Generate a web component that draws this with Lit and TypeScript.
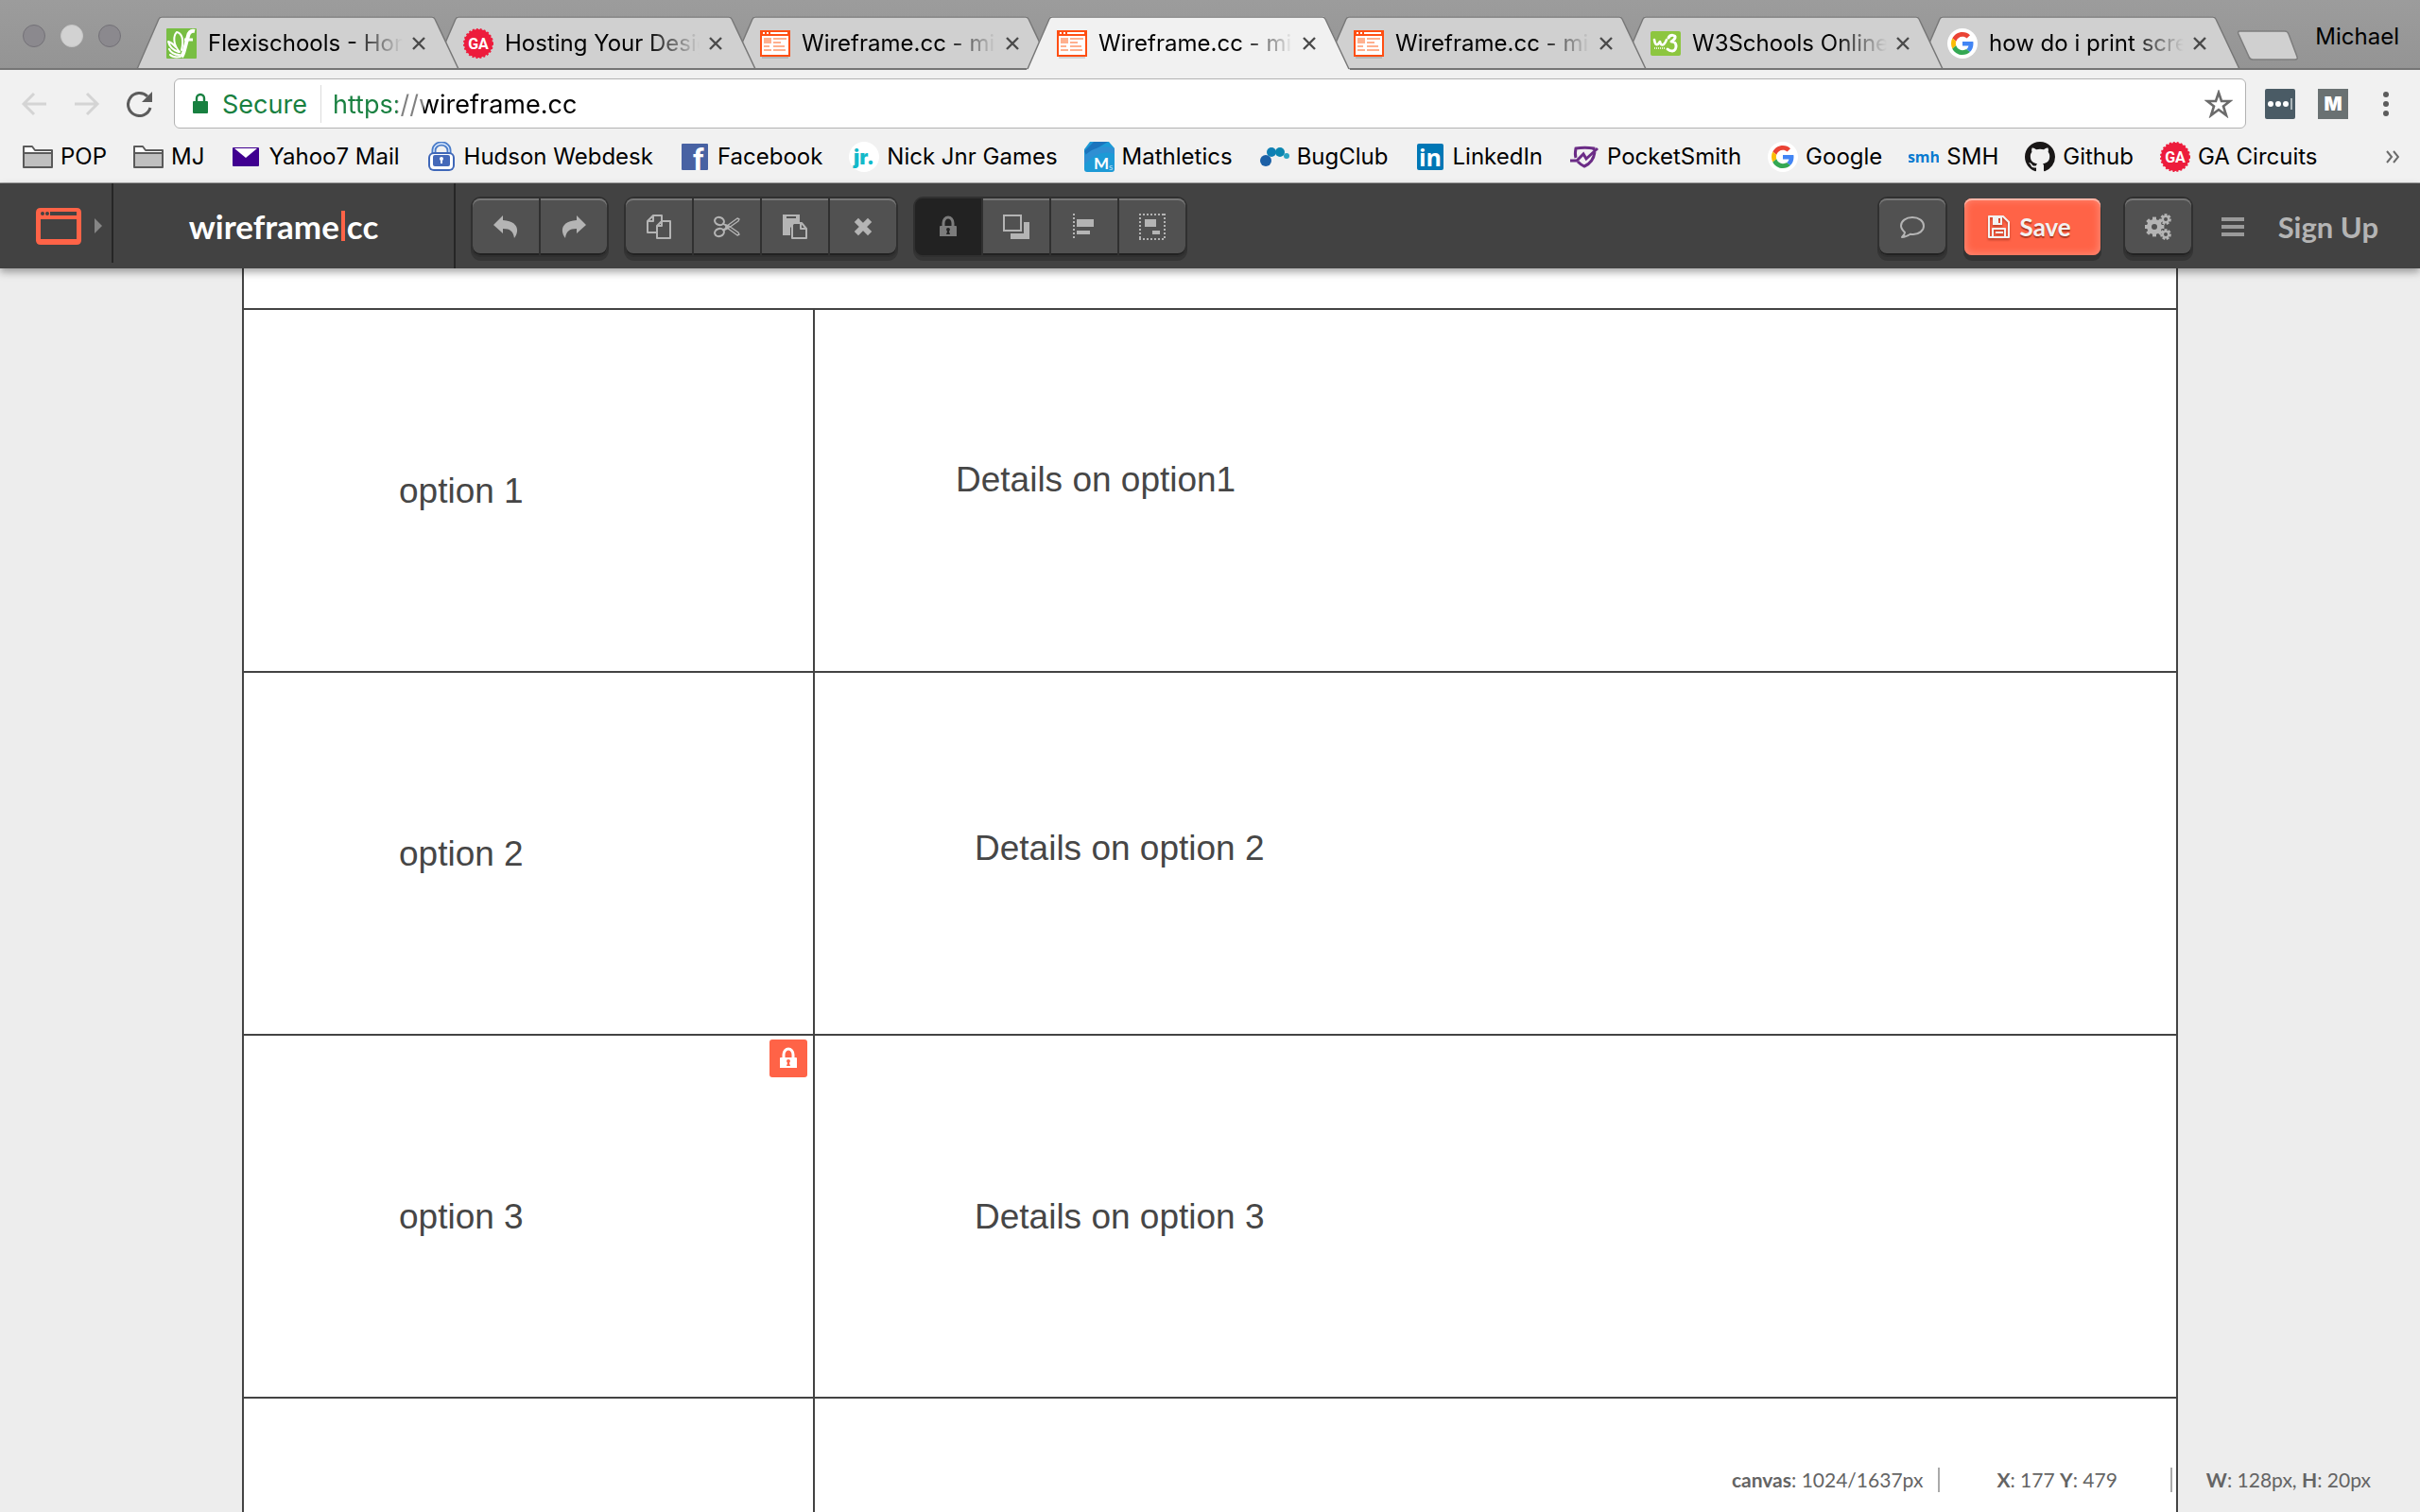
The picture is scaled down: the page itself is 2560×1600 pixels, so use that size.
import { LitElement, html, css, svg, TemplateResult } from "lit";
import { customElement, property, state } from "lit/decorators.js";
import { classMap } from "lit/directives/class-map.js";
import { styleMap } from "lit/directives/style-map.js";

const googleG = (t: string) => svg`<g transform=${t}>
  <path fill="#EA4335" d="M24 9.5c3.54 0 6.71 1.22 9.21 3.6l6.85-6.85C35.9 2.38 30.47 0 24 0 14.62 0 6.51 5.38 2.56 13.22l7.98 6.19C12.43 13.72 17.74 9.5 24 9.5z"/>
  <path fill="#4285F4" d="M46.98 24.55c0-1.57-.15-3.09-.38-4.55H24v9.02h12.94c-.58 2.96-2.26 5.48-4.78 7.18l7.73 6c4.51-4.18 7.09-10.36 7.09-17.65z"/>
  <path fill="#FBBC05" d="M10.53 28.59c-.48-1.45-.76-2.99-.76-4.59s.27-3.14.76-4.59l-7.98-6.19C.92 16.46 0 20.12 0 24c0 3.88.92 7.54 2.56 10.78l7.97-6.19z"/>
  <path fill="#34A853" d="M24 48c6.48 0 11.93-2.13 15.89-5.81l-7.73-6c-2.15 1.45-4.92 2.3-8.16 2.3-6.26 0-11.57-4.22-13.47-9.91l-7.98 6.19C6.51 42.62 14.62 48 24 48z"/></g>`;

/* 32-unit site and folder icons */
const SITE: Record<string, TemplateResult> = {
  flexi: svg`<rect width="32" height="32" rx="1" fill="#78be43"/>
    <g fill="none" stroke="#fff" stroke-width="2" stroke-linejoin="round" stroke-linecap="round">
      <path d="M14 25C7 17 7 8 11 4c5 1 8 7 5 19"/><path d="M13 25C7 23 3 19 2 14c3 1 6 3 8 6"/>
      <path d="M14 28C9 28 5 26 3 22"/><path d="M15 30C10 31 6 30 4 28"/>
      <path stroke-width="4" stroke-linecap="butt" d="M30 3c-4-1-6 1-7 5l-4 15c-1 4-2 6-3 7"/><path stroke-width="3" stroke-linecap="butt" d="M19 12h9"/></g>`,
  ga: svg`<circle cx="16" cy="16" r="15" fill="#ed1c3c"/><circle cx="16" cy="16" r="15" fill="none" stroke="#ed1c3c" stroke-width="2" stroke-dasharray="2 2"/>
    <text x="16" y="22" text-anchor="middle" font-family="Roboto, sans-serif" font-weight="700" font-size="16" fill="#fff">GA</text>`,
  wire: svg`<rect x="2" y="28" width="28" height="4" fill="#000" opacity=".12"/><rect width="32" height="28" y="2" fill="#ff4e12"/><rect x="2" y="8" width="28" height="20" fill="#fff"/>
    <path fill="#fff" d="M3 4h2v2H3zM7 4h2v2H7zM11 4h18v2H11z"/>
    <path fill="#ffb08e" d="M4 10h8v6H4zM14 10h14v2H14zM14 14h8v2H14zM4 18h6v2H4zM14 18h12v2H14zM4 22h8v2H4zM14 22h13v2H14z"/>`,
  w3: svg`<rect x="0" y="3" width="32" height="26" rx="2" fill="#8dc63f"/>
    <path fill="none" stroke="#fff" stroke-width="2.6" stroke-linecap="round" stroke-linejoin="round" d="M4 12c1 6 3 7 6 2 1 5 4 5 7-2"/>
    <path fill="none" stroke="#fff" stroke-width="3" stroke-linecap="round" stroke-linejoin="round" d="M19 10c2-4 8-3 7 0-1 3-3 3-4 4 6-1 7 9 1 10-3 0-4-1-5-2"/>
    <path stroke="#e5f2d2" stroke-width="2" stroke-dasharray="1 1" d="M4 21h12"/>`,
  google: svg`<circle cx="16" cy="16" r="16" fill="#fff"/>${googleG("translate(4 4) scale(.5)")}`,
  folder: svg`<path d="M1 8V5h9l3 4h18v18H1z" fill="#fff" stroke="#5a5a5a" stroke-width="2" stroke-linejoin="round"/><path d="M2 13h28v13H2z" fill="#c0c0c0"/><path d="M1 12h30" stroke="#5a5a5a" stroke-width="2"/>`,
  mail: svg`<rect x="2" y="6" width="28" height="20" rx="1" fill="#400090"/><path fill="#fff" d="M4 7h24l-12 10z"/>`,
  webdesk: svg`<path d="M8 14V9a8 7 0 0 1 16 0v5" fill="none" stroke="#4a7cc9" stroke-width="5"/><path d="M8 14V9a8 7 0 0 1 16 0v5" fill="none" stroke="#dcebff" stroke-width="1.4"/>
    <rect x="2" y="11" width="28" height="20" rx="6" fill="#3f67b8"/><rect x="4" y="13" width="24" height="16" rx="4" fill="#fff"/><rect x="7" y="14" width="18" height="12" rx="2" fill="#4569b9"/>
    <circle cx="16" cy="18" r="2" fill="#fff"/><path stroke="#fff" stroke-width="2" d="M16 18v5"/>`,
  fb: svg`<rect x="2" y="2" width="28" height="28" rx="1" fill="#4862a3"/><text x="14" y="30" font-family="Roboto, sans-serif" font-weight="700" font-size="32" fill="#fff">f</text>`,
  jr: svg`<circle cx="16" cy="16" r="16" fill="#fff"/><text x="16" y="24" text-anchor="middle" font-family="Inter, sans-serif" font-weight="900" font-size="21" fill="#12b9c9">jr.</text>`,
  mathletics: svg`<path d="M6 0h20l6 7v22q0 3-3 3H3q-3 0-3-3V8z" fill="#1d9ad6"/><path d="M10 0h15L2 14l-2-4z" fill="#1c74bd"/><path d="M32 7v6C20 9 10 14 0 24v-9C10 6 20 3 32 7z" fill="#2f8fd3"/>
    <text x="10" y="29" font-family="Lato, sans-serif" font-weight="700" font-size="17" fill="#fff">M</text><text x="26" y="30" font-family="Lato, sans-serif" font-size="10" fill="#bfe4f6">s</text>`,
  bug: svg`<g><circle cx="7" cy="20" r="6" fill="#1c60a6"/><circle cx="13" cy="11" r="5" fill="#0f7fb4"/><circle cx="22" cy="11" r="5" fill="#0c86b0"/><circle cx="29" cy="15" r="3" fill="#2ba3c2"/></g>`,
  linkedin: svg`<rect x="2" y="2" width="28" height="28" rx="2" fill="#0077b5"/><text x="16" y="26" text-anchor="middle" font-family="'Open Sans', sans-serif" font-weight="700" font-size="25" fill="#fff">in</text>`,
  pocket: svg`<g fill="none" stroke="#6b2c86" stroke-width="3"><path d="M26 9V7c-7-1-12-1-19 0-1 5-1 7 0 10"/><path d="M1 20h7l7-7 3 5L30 7"/><path d="M27 11c-1 7-4 12-11 15-3-1-5-3-7-5"/></g>`,
  smh: svg`<text x="16" y="22" text-anchor="middle" font-family="'Open Sans', sans-serif" font-weight="700" font-size="16" fill="#0a7bd0">smh</text>`,
  github: svg`<path transform="scale(2)" fill="#191717" d="M8 0C3.58 0 0 3.58 0 8c0 3.54 2.29 6.53 5.47 7.59.4.07.55-.17.55-.38 0-.19-.01-.82-.01-1.49-2.01.37-2.53-.49-2.69-.94-.09-.23-.48-.94-.82-1.13-.28-.15-.68-.52-.01-.53.63-.01 1.08.58 1.23.82.72 1.21 1.87.87 2.33.66.07-.52.28-.87.51-1.07-1.78-.2-3.64-.89-3.64-3.95 0-.87.31-1.59.82-2.15-.08-.2-.36-1.02.08-2.12 0 0 .67-.21 2.2.82.64-.18 1.32-.27 2-.27s1.36.09 2 .27c1.53-1.04 2.2-.82 2.2-.82.44 1.1.16 1.92.08 2.12.51.56.82 1.27.82 2.15 0 3.07-1.87 3.75-3.65 3.95.29.25.54.73.54 1.48 0 1.07-.01 1.93-.01 2.2 0 .21.15.46.55.38A8.01 8.01 0 0 0 16 8c0-4.42-3.58-8-8-8z"/>`,
};

const gear = (cx: number, cy: number, r: number, w: number, n: number, hole: number) => svg`
  <g transform="translate(${cx} ${cy})"><circle r=${(r + hole) / 2} fill="none" stroke="currentColor" stroke-width=${r - hole}/>
  ${Array.from({ length: n }, (_, i) => svg`<rect x=${-w / 2} y=${-r - w * 0.6} width=${w} height=${w} fill="currentColor" transform="rotate(${(i * 360) / n})"/>`)}</g>`;

/* 28-unit tool icons */
const TOOL: Record<string, TemplateResult> = {
  undo: svg`<path fill="currentColor" d="M11 2 1 12l10 9v-5c8 0 11 3 12 10 6-8 4-18-12-19z"/>`,
  redo: svg`<path fill="currentColor" d="M17 2l10 10-10 9v-5C9 16 6 19 5 26-1 18 1 8 17 7z"/>`,
  copy: svg`<path fill="none" stroke="currentColor" stroke-width="2" stroke-linejoin="round" d="M11 20H2V8l6-6h9v6M8 2v6H2M17 8h9v18H12V13zM17 8v5h-5"/>`,
  cut: svg`<g fill="none" stroke="currentColor"><ellipse cx="6" cy="8" rx="5" ry="4" stroke-width="2" transform="rotate(20 6 8)"/><ellipse cx="6" cy="20" rx="5" ry="4" stroke-width="2" transform="rotate(-20 6 20)"/>
    <path stroke-width="1.4" stroke-linejoin="round" d="M10 11l4 2 11-8 2 1-1 2-10 7-6 3M10 17l4-2 11 8 2-1-1-2-10-7-6-2"/></g><circle cx="14" cy="14" r="2" fill="currentColor"/>`,
  paste: svg`<path fill="currentColor" fill-rule="evenodd" d="M1 1h18v8h-4l-6 6v8H1zM5 3v2h10V3z"/><path fill="none" stroke="currentColor" stroke-width="2" stroke-linejoin="round" d="M17 10h4l5 6v10H11V10zM20 10v6h6"/>`,
  remove: svg`<path stroke="currentColor" stroke-width="6" stroke-linecap="square" stroke-linejoin="round" d="M9 9l10 10M19 9 9 19"/>`,
  lock: svg`<path fill="none" stroke="currentColor" stroke-width="3" d="M9 14V10a5 6 0 0 1 10 0v4"/><path fill="currentColor" fill-rule="evenodd" d="M6 13h16q1 0 1 1v10H5V14q0-1 1-1zm8 2a2 2 0 0 0-2 2l1 2-1 3h4l-1-3 1-2a2 2 0 0 0-2-2z"/>`,
  layers: svg`<path fill="currentColor" d="M22 9h6v18H8v-6h14z"/><rect x="1" y="2" width="18" height="16" fill="none" stroke="currentColor" stroke-width="2"/>`,
  align: svg`<path stroke="currentColor" stroke-width="2" stroke-dasharray="2 2" d="M3 0v28"/><path fill="currentColor" d="M6 6h18v8H6zM6 18h14v4H6z"/>`,
  group: svg`<path fill="none" stroke="currentColor" stroke-width="2" stroke-dasharray="2 2" d="M0 1h28M0 27h28M1 0v28M27 0v28"/><path fill="currentColor" d="M6 6h12v8H6zM14 18h8v4h-8z"/>`,
  comment: svg`<path fill="none" stroke="currentColor" stroke-width="2" stroke-linejoin="round" d="M14 4c7 0 12 4 12 9s-5 9-11 9c-2 0-2 0-3-.3C10 23 7 25 3 25c2-2 3-3 3-5-2-2-4-4-4-7 0-5 5-9 12-9z"/>`,
  gears: svg`${gear(10, 14, 8, 4, 8, 3)}${gear(22, 6, 4, 3, 7, 2)}${gear(22, 22, 4, 3, 7, 2)}`,
  save: svg`<path fill="none" stroke="currentColor" stroke-width="2" stroke-linejoin="round" d="M3 3h15l6 6v16H3zM7 25v-9h13v9"/><path fill="currentColor" fill-rule="evenodd" d="M7 3h10v9H7zm6 2v5h2V5z"/><path stroke="currentColor" stroke-width="2" d="M10 20h8"/>`,
};

const TABS = [
  { icon: "flexi", title: "Flexischools - Home" },
  { icon: "ga", title: "Hosting Your Design" },
  { icon: "wire", title: "Wireframe.cc - minimal" },
  { icon: "wire", title: "Wireframe.cc - minimal" },
  { icon: "wire", title: "Wireframe.cc - minimal" },
  { icon: "w3", title: "W3Schools Online" },
  { icon: "google", title: "how do i print screen" },
];

const BOOKMARKS = [
  ["folder", "POP"], ["folder", "MJ"], ["mail", "Yahoo7 Mail"], ["webdesk", "Hudson Webdesk"], ["fb", "Facebook"],
  ["jr", "Nick Jnr Games"], ["mathletics", "Mathletics"], ["bug", "BugClub"], ["linkedin", "LinkedIn"],
  ["pocket", "PocketSmith"], ["google", "Google"], ["smh", "SMH"], ["github", "Github"], ["ga", "GA Circuits"],
];

const TOOL_GROUPS = [
  [["undo", "Undo"], ["redo", "Redo"]],
  [["copy", "Copy"], ["cut", "Cut"], ["paste", "Paste"], ["remove", "Delete"]],
  [["lock", "Lock"], ["layers", "Order"], ["align", "Align"], ["group", "Group"]],
];

/* Text boxes placed on the drawing, in canvas pixels from the corner of their cell */
const ROWS = [
  { label: "option 1", lx: 164, ly: 172, detail: "Details on option1", dx: 149, dy: 160 },
  { label: "option 2", lx: 164, ly: 172, detail: "Details on option 2", dx: 169, dy: 166 },
  { label: "option 3", lx: 164, ly: 172, detail: "Details on option 3", dx: 169, dy: 172, locked: true },
];

const reset = css`
  * { box-sizing: border-box; }
  button { appearance: none; border: 0; margin: 0; padding: 0; background: none; font: inherit; color: inherit; cursor: pointer; }
  a { color: inherit; text-decoration: none; }
  svg { display: block; flex: none; }
`;

@customElement("browser-tabs")
class BrowserTabs extends LitElement {
  @state() private active = 3;
  static styles = [reset, css`
    :host { display: block; font: 24px/32px Inter, sans-serif; color: #000; }
    .strip { display: flex; height: 74px; padding: 17px 22px 0 24px; background: linear-gradient(#9c9c9c, #949494); box-shadow: inset 0 -2px #757575; }
    .lights { display: flex; gap: 16px; padding: 9px 0 0; flex: none; width: 120px; }
    .light { width: 24px; height: 24px; border-radius: 50%; background: #8b898e; border: 1px solid #737177; }
    .light.mid { background: #d2d2d2; border-color: #c6c6c6; }
    .tabs { display: flex; flex: 0 1 auto; min-width: 0; isolation: isolate; }
    .tab { position: relative; flex: 0 1 342px; min-width: 0; height: 57px; display: flex; align-items: center; gap: 10px; padding: 0 32px; }
    .tab + .tab { margin-left: -28px; }
    .shape { position: absolute; inset: 0; width: 100%; height: 100%; z-index: -1; fill: #d0d0d0; stroke: #777; }
    .tab.on .shape { fill: #f1f1f1; }
    .pick { display: flex; gap: 12px; flex: 1; min-width: 0; text-align: left; align-items: center; }
    .title { flex: 1; overflow: hidden; white-space: nowrap; mask-image: linear-gradient(to right, #000 calc(100% - 56px), transparent); }
    .close { width: 14px; height: 14px; margin-right: 4px; }
    .new { margin: 15px 0 0 -4px; align-self: flex-start; }
    .user { margin-left: auto; padding-top: 6px; align-self: flex-start; }
  `];
  render() {
    return html`<header class="strip">
      <div class="lights"><span class="light"></span><span class="light mid"></span><span class="light"></span></div>
      <div class="tabs" role="tablist">
        ${TABS.map((t, i) => html`<div class=${classMap({ tab: true, on: i === this.active })} style=${styleMap({ zIndex: i === this.active ? "20" : String(10 - i) })}>
          <svg class="shape" viewBox="0 0 342 57" preserveAspectRatio="none"><path stroke="none" d=${i === this.active ? "M0 57 24 2q1-2 3-2h286q2 0 3 2l26 55z" : "M1 55 24 2q1-2 3-2h286q2 0 3 2l24 53z"}/><path fill="none" stroke-width="1.5" d="M1 56 24 3q1-2 3-2h286q2 0 3 2l25 53"/></svg>
          <button class="pick" role="tab" aria-selected=${i === this.active ? "true" : "false"} @click=${() => (this.active = i)}>
            <svg width="32" height="32" viewBox="0 0 32 32">${SITE[t.icon]}</svg><span class="title">${t.title}</span></button>
          <button class="close" aria-label="Close tab"><svg width="14" height="14" viewBox="0 0 14 14"><path d="M1 1l12 12M13 1 1 13" stroke="#4a4a4a" stroke-width="2.4"/></svg></button>
        </div>`)}
      </div>
      <button class="new" aria-label="New tab"><svg width="68" height="34" viewBox="0 0 68 34"><path d="M3 1h48q3 0 4 3l9 24q1 3-2 3H17q-3 0-4-3L2 4q-1-3 1-3z" fill="#d0d0d0" stroke="#7d7d7d" stroke-width="1.5"/></svg></button>
      <button class="user">Michael</button>
    </header>`;
  }
}

@customElement("browser-bar")
class BrowserBar extends LitElement {
  static styles = [reset, css`
    :host { display: block; background: #f1f1f1; border-bottom: 1px solid #a4a4a4; font: 24px/32px Inter, sans-serif; color: #000; }
    .nav { display: flex; align-items: center; padding: 9px 28px 0 22px; }
    .arrow, .reload { width: 28px; height: 28px; margin-right: 28px; }
    .reload { margin-right: 22px; }
    .omni { flex: 1; height: 53px; display: flex; align-items: center; padding: 0 13px 0 18px; background: #fff; border: 1px solid #b2b2b2; border-radius: 6px; font-size: 27px; }
    .secure { color: #188040; margin: 0 14px; padding-top: 2px; }
    .rule { width: 1px; height: 40px; background: #dcdcdc; margin-right: 12px; }
    .url { flex: 1; min-width: 0; height: 40px; border: 0; outline: 0; padding: 2px 0 0; font: inherit; color: transparent;
      background: linear-gradient(to right, #188040 68px, #808080 68px 96px, #000 96px); background-clip: text; -webkit-background-clip: text; }
    .ext { margin-left: 20px; }
    .ext.next { margin-left: 24px; }
    .dots { margin-left: 36px; }
    .marks { display: flex; align-items: center; gap: 28px; height: 57px; padding: 2px 22px 0 24px; }
    .mark { display: flex; align-items: center; gap: 8px; white-space: nowrap; }
    .more { margin-left: auto; }
  `];
  render() {
    return html`<div class="nav">
        <button class="arrow" aria-label="Back"><svg width="28" height="28" viewBox="0 0 28 28"><path d="M27 14H3M14 3 3 14l11 11" fill="none" stroke="#d4d4d4" stroke-width="3"/></svg></button>
        <button class="arrow" aria-label="Forward"><svg width="28" height="28" viewBox="0 0 28 28"><path d="M1 14h24M14 3l11 11-11 11" fill="none" stroke="#d4d4d4" stroke-width="3"/></svg></button>
        <button class="reload" aria-label="Reload"><svg width="28" height="28" viewBox="0 0 28 28"><path d="M25 18A12 12 0 1 1 22 6" fill="none" stroke="#5c5c5c" stroke-width="3"/><path d="M27 1v11H16z" fill="#5c5c5c"/></svg></button>
        <div class="omni">
          <svg width="18" height="24" viewBox="0 0 18 24"><path d="M5 11V6a4 4 0 0 1 8 0v5" fill="none" stroke="#188040" stroke-width="2.4"/><rect x="1" y="9" width="16" height="13" rx="1" fill="#188040"/></svg>
          <label class="secure" for="url">Secure</label><span class="rule"></span>
          <input class="url" id="url" type="text" value="https://wireframe.cc" spellcheck="false" />
          <button aria-label="Bookmark this page"><svg width="30" height="30" viewBox="0 0 30 30"><path d="M15 3l3 9h9l-7 5.500 3 9.500-8-6-8 6 3-9.500L3 12h9z" fill="none" stroke="#6b6b6b" stroke-width="2.600"/></svg></button>
        </div>
        <button class="ext" aria-label="Password manager"><svg width="32" height="32" viewBox="0 0 32 32"><rect width="32" height="32" rx="2" fill="#4a5b65"/><circle cx="6" cy="16" r="3" fill="#fff"/><circle cx="14" cy="16" r="3" fill="#fff"/><circle cx="22" cy="16" r="3" fill="#fff"/><path d="M28 10v12" stroke="#cdd3d6" stroke-width="1.500"/></svg></button>
        <button class="ext next" aria-label="Mail extension"><svg width="32" height="32" viewBox="0 0 32 32"><rect width="32" height="32" fill="#6a7172"/><text x="16" y="23" text-anchor="middle" font-family="Inter, sans-serif" font-weight="900" font-size="20" fill="#fff">M</text></svg></button>
        <button class="dots" aria-label="Menu"><svg width="12" height="28" viewBox="0 0 12 28"><g fill="#5c5c5c"><circle cx="4" cy="4" r="3"/><circle cx="4" cy="14" r="3"/><circle cx="4" cy="24" r="3"/></g></svg></button>
      </div>
      <nav class="marks">
        ${BOOKMARKS.map(([icon, name]) => {
          const inner = html`<svg width="32" height="32" viewBox="0 0 32 32">${SITE[icon]}</svg><span>${name}</span>`;
          return icon === "folder" ? html`<button class="mark">${inner}</button>` : html`<a class="mark" href="#">${inner}</a>`;
        })}
        <button class="more" aria-label="More bookmarks"><svg width="14" height="14" viewBox="0 0 14 14"><path d="M1 1l5 6-5 6M8 1l5 6-5 6" fill="none" stroke="#6b6b6b" stroke-width="2"/></svg></button>
      </nav>`;
  }
}

@customElement("editor-bar")
class EditorBar extends LitElement {
  @property({ type: Boolean }) locked = true;
  static styles = [reset, css`
    :host { display: block; position: relative; z-index: 2; }
    .bar { display: flex; align-items: flex-start; height: 90px; background: #424242; box-shadow: 0 4px 8px rgba(0, 0, 0, 0.35); font: 700 26px/32px Lato, sans-serif; color: #b4b4b4; }
    .device { display: flex; align-items: center; gap: 14px; width: 120px; height: 84px; padding: 6px 0 0 38px; border-right: 2px solid #262626; }
    .brand { display: flex; align-items: center; justify-content: center; gap: 2px; width: 362px; height: 90px; border-right: 2px solid #262626; color: #fff; font-size: 35px; }
    .caret { width: 4px; height: 32px; background: #ff6347; }
    .tools { display: flex; gap: 20px; padding: 16px 0 0 18px; }
    .set { display: flex; gap: 2px; background: #303030; border-radius: 9px; box-shadow: 0 0 0 2px #303030, 0 4px 0 2px #353535; }
    .btn { width: 70px; height: 60px; display: grid; place-items: center; background: #515151; box-shadow: inset 0 2px #767676, inset 0 -2px #222; }
    .btn:first-child { border-radius: 8px 0 0 8px; }
    .btn:last-child { border-radius: 0 8px 8px 0; }
    .btn:only-child { border-radius: 8px; }
    .btn.on { background: #222; box-shadow: none; color: #7c7c7c; }
    .side { display: flex; align-items: center; margin-left: auto; padding: 16px 44px 0 0; }
    .save { width: 144px; height: 60px; margin: 0 26px 0 20px; display: flex; align-items: center; justify-content: center; gap: 8px; padding-right: 8px; color: #f2f2f2; background: #ff6347; border-radius: 8px; text-shadow: 0 2px 1px rgba(120, 30, 10, 0.6);
      box-shadow: inset 0 2px #ffb6a8, inset 0 0 8px 1px #ff8e7a, 0 5px 0 1px #333; }
    .save svg { filter: drop-shadow(0 2px 1px rgba(120, 30, 10, 0.5)); }
    .menu { margin: 0 36px 0 32px; }
    .sign { font-size: 31px; }
  `];
  render() {
    const icon = (n: string) => html`<svg width="28" height="28" viewBox="0 0 28 28">${TOOL[n]}</svg>`;
    return html`<div class="bar">
      <button class="device" aria-label="Choose device">
        <svg width="48" height="39" viewBox="0 0 48 39"><path fill="#ff6347" fill-rule="evenodd" d="M5 0h38q5 0 5 5v29q0 5-5 5H5q-5 0-5-5V5q0-5 5-5zM5 12v21h38V12zM15 4v4h28V4z"/><circle cx="7" cy="6" r="2" fill="#424242"/><circle cx="12" cy="6" r="2" fill="#424242"/></svg>
        <svg width="8" height="16" viewBox="0 0 8 16"><path d="M0 0l8 8-8 8z" fill="#868686"/></svg>
      </button>
      <a class="brand" href="#"><span>wireframe</span><span class="caret"></span><span>cc</span></a>
      <div class="tools">${TOOL_GROUPS.map((g) => html`<div class="set">${g.map(([n, label]) => html`
        <button class=${classMap({ btn: true, on: n === "lock" && this.locked })} aria-label=${label}>${icon(n)}</button>`)}</div>`)}</div>
      <div class="side">
        <div class="set"><button class="btn" aria-label="Comments">${icon("comment")}</button></div>
        <button class="save">${icon("save")}<span>Save</span></button>
        <div class="set"><button class="btn" aria-label="Settings">${icon("gears")}</button></div>
        <button class="menu" aria-label="Menu"><svg width="24" height="20" viewBox="0 0 24 20"><path d="M0 2h24M0 10h24M0 18h24" stroke="#9a9a9a" stroke-width="4"/></svg></button>
        <a class="sign" href="#">Sign Up</a>
      </div>
    </div>`;
  }
}

@customElement("wire-canvas")
class WireCanvas extends LitElement {
  static styles = [reset, css`
    :host { display: flex; flex-direction: column; position: relative; background: #ededed; overflow: hidden; }
    .sheet { flex: 1; display: flex; flex-direction: column; width: 80%; margin: 0 auto; background: #fff; border: solid #434343; border-width: 0 2px; }
    .head { height: 42px; }
    .row { display: grid; grid-template-columns: 604px 1fr; height: 384px; border-top: 2px solid #434343; }
    .row.last { height: auto; flex: 1; }
    .cell { position: relative; }
    .cell:first-child { border-right: 2px solid #434343; }
    .text { position: absolute; font: 37px/40px "Liberation Sans", Arial, sans-serif; color: #464646; white-space: nowrap; }
    .badge { position: absolute; top: 4px; right: 6px; width: 40px; height: 40px; border-radius: 3px; background: #ff6347; color: #fff; display: grid; place-items: center; }
    .status { position: absolute; right: 52px; bottom: 18px; display: flex; align-items: center; font: 21px/32px Lato, sans-serif; color: #646464; white-space: nowrap; }
    .rule { width: 2px; height: 26px; background: #aaa; }
    .status .rule:nth-child(2) { margin: 0 60px 0 16px; }
    .status .rule:nth-child(4) { margin: 0 36px 0 56px; }
  `];
  render() {
    const at = (x: number, y: number) => styleMap({ left: `${x}px`, top: `${y}px` });
    return html`<main class="sheet">
        <div class="head"></div>
        ${ROWS.map((r) => html`<section class="row">
          <div class="cell"><span class="text" style=${at(r.lx, r.ly)}>${r.label}</span>
            ${r.locked ? html`<button class="badge" aria-label="Locked"><svg width="28" height="28" viewBox="0 0 28 28">${TOOL.lock}</svg></button>` : ""}</div>
          <div class="cell"><span class="text" style=${at(r.dx, r.dy)}>${r.detail}</span></div>
        </section>`)}
        <section class="row last"><div class="cell"></div><div class="cell"></div></section>
      </main>
      <footer class="status"><span><b>canvas</b>: 1024/1637px</span><span class="rule"></span><span><b>X</b>: 177 <b>Y</b>: 479</span><span class="rule"></span><span><b>W</b>: 128px, <b>H</b>: 20px</span></footer>`;
  }
}

@customElement("app-root")
class AppRoot extends LitElement {
  static styles = css`
    :host { display: flex; flex-direction: column; height: 100vh; overflow: hidden; }
    wire-canvas { flex: 1; }
  `;
  render() {
    return html`<browser-tabs></browser-tabs><browser-bar></browser-bar><editor-bar locked></editor-bar><wire-canvas></wire-canvas>`;
  }
}
